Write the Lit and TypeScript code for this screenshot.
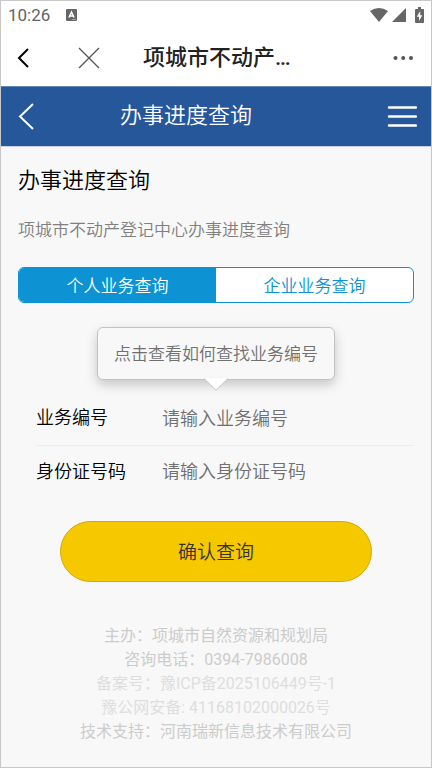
import { LitElement, html, css } from "lit";
import { customElement, state } from "lit/decorators.js";

@customElement("app-status-bar")
class AppStatusBar extends LitElement {
  static styles = css`
    :host {
      display: flex;
      align-items: center;
      height: 28px;
      padding: 0 7px;
      color: #636363;
      font: 17px/28px Roboto, sans-serif;
    }
    .badge {
      margin-left: 16px;
    }
    .signals {
      display: flex;
      align-items: center;
      margin-left: auto;
    }
    svg {
      display: block;
      fill: #666;
    }
    .cell {
      margin-left: 4px;
    }
    .battery {
      margin-left: 9px;
    }
    .cut {
      fill: #fff;
    }
    .letter {
      fill: none;
      stroke: #fff;
      stroke-width: 1.5;
    }
  `;

  render() {
    return html`
      <span>10:26</span>
      <svg class="badge" width="11" height="12" viewBox="0 0 11 12" aria-hidden="true">
        <rect width="11" height="12" rx="1" />
        <path class="letter" d="M3 8.5 5.5 3 8 8.5M3.8 7H7.2" />
        <rect class="cut" x="6" y="10" width="4" height="1" opacity="0.4" />
      </svg>
      <div class="signals">
        <svg width="18" height="14" viewBox="0 0 18 14" aria-hidden="true">
          <path d="M0 3Q9-3 18 3L9 14Z" />
        </svg>
        <svg class="cell" width="14" height="14" viewBox="0 0 14 14" aria-hidden="true">
          <path d="M14 0V14H0Z" />
        </svg>
        <svg class="battery" width="9" height="16" viewBox="0 0 9 16" aria-hidden="true">
          <path d="M3 0H6V2H8Q9 2 9 3V15Q9 16 8 16H1Q0 16 0 15V3Q0 2 1 2H3Z" />
          <path class="cut" d="M5.2 4 1.8 9.8H4V14L7.3 8.2H5.2Z" />
        </svg>
      </div>
    `;
  }
}

@customElement("app-root")
class AppRoot extends LitElement {
  @state() private tab = 0;

  static styles = css`
    :host {
      display: block;
      box-sizing: border-box;
      min-height: 100vh;
      border: 1px solid #c8c8c8;
      background: #f8f8f8;
      color: #000;
      font-family: Roboto, "Noto Sans CJK SC", sans-serif;
      font-weight: 350;
    }
    * {
      box-sizing: border-box;
    }
    h1,
    h2,
    p {
      margin: 0;
      font-weight: inherit;
    }
    button {
      padding: 0;
      border: 0;
      background: none;
      font: inherit;
      color: inherit;
      cursor: pointer;
    }
    svg {
      display: block;
      fill: none;
    }
    .top {
      background: #fff;
    }
    .nav {
      display: flex;
      align-items: center;
      height: 57px;
      padding: 0 18px 0 16px;
    }
    .close {
      margin-left: 48px;
    }
    .site {
      margin-left: 42px;
      color: #222;
      font-size: 22px;
      font-weight: 500;
      line-height: 32px;
    }
    .more {
      margin-left: auto;
    }
    .header {
      display: grid;
      grid-template-columns: 30px 1fr 30px;
      align-items: center;
      height: 61px;
      padding: 0 14px 0 16px;
      border-top: 1px solid #6488b5;
      border-bottom: 1px solid #c5d0e4;
      background: #26579b;
      color: #fff;
    }
    .header h1 {
      padding-right: 62px;
      padding-bottom: 2px;
      font-size: 22px;
      line-height: 32px;
      text-align: center;
    }
    .main {
      padding: 18px 17px 20px;
    }
    .title {
      font-size: 22px;
      line-height: 32px;
    }
    .intro {
      margin-top: 20px;
      color: #808080;
      font-size: 17px;
      line-height: 26px;
    }
    .tabs {
      display: flex;
      height: 36px;
      margin-top: 24px;
      border: 1px solid #0d93d3;
      border-radius: 6px;
      overflow: hidden;
      background: #fff;
    }
    .tab {
      flex: 1;
      color: #0d93d3;
      font-size: 17px;
      line-height: 36px;
    }
    .tab.on {
      background: #0d93d3;
      color: #fff;
    }
    .tip {
      position: relative;
      display: block;
      height: 53px;
      margin: 24px auto 0;
      padding: 0 16px;
      border: 1px solid #c3c3c3;
      border-radius: 6px;
      background: #f8f8f8;
      box-shadow: 0 5px 12px rgba(0, 0, 0, 0.2);
      color: #707070;
      font-size: 17px;
      line-height: 50px;
    }
    .arrow {
      position: absolute;
      top: 100%;
      left: 50%;
      margin: -1px 0 0 -12px;
      fill: #fff;
      stroke: #c3c3c3;
    }
    .form {
      margin-top: 11px;
    }
    .field {
      display: flex;
      align-items: center;
      height: 54px;
      margin-left: 18px;
      font-size: 18px;
    }
    .field + .field {
      border-top: 1px solid #ededed;
      height: 52px;
    }
    .field label {
      width: 126px;
      line-height: 26px;
    }
    .field input {
      flex: 1;
      min-width: 0;
      padding: 0;
      border: 0;
      outline: 0;
      background: none;
      font: inherit;
    }
    .field input::placeholder {
      color: #707070;
    }
    .submit {
      display: block;
      width: calc(100% - 84px);
      height: 61px;
      margin: 24px auto 0;
      padding-bottom: 2px;
      border: 1px solid #d2ab07;
      border-radius: 31px;
      background: #f6c800;
      color: #333;
      font-size: 19px;
    }
    .footer {
      margin-top: 42px;
      color: #ccc;
      font-size: 16px;
      font-weight: 400;
      line-height: 24px;
      text-align: center;
    }
    .footer a {
      display: block;
      color: #dedede;
      text-decoration: none;
    }
  `;

  private renderTab(label: string, index: number) {
    const on = this.tab === index;
    return html`<button
      type="button"
      class="tab ${on ? "on" : ""}"
      aria-pressed=${on}
      @click=${() => (this.tab = index)}
    >${label}</button>`;
  }

  render() {
    return html`
      <div class="top">
        <app-status-bar></app-status-bar>
        <nav class="nav">
          <button type="button" aria-label="返回">
            <svg width="12" height="20" viewBox="0 0 12 20" stroke="#000" stroke-width="2">
              <path d="M11 1 2 10l9 9" />
            </svg>
          </button>
          <button type="button" class="close" aria-label="关闭">
            <svg width="24" height="22" viewBox="0 0 24 22" stroke="#555" stroke-width="1.3">
              <path d="M2 1 22 21M22 1 2 21" />
            </svg>
          </button>
          <p class="site">项城市不动产…</p>
          <button type="button" class="more" aria-label="更多">
            <svg width="20" height="6" viewBox="0 0 20 6">
              <g fill="#55554f">
                <circle cx="2.5" cy="3" r="2" />
                <circle cx="10.2" cy="3" r="2" />
                <circle cx="18" cy="3" r="2" />
              </g>
            </svg>
          </button>
        </nav>
      </div>
      <header class="header">
        <button type="button" aria-label="上一页">
          <svg width="18" height="28" viewBox="0 0 18 28" stroke="#fff" stroke-width="2">
            <path d="M16 1 3 13.5 16 26" />
          </svg>
        </button>
        <h1>办事进度查询</h1>
        <button type="button" aria-label="菜单">
          <svg width="30" height="22" viewBox="0 0 30 22" stroke="#fff" stroke-width="2.4" stroke-linecap="round">
            <path d="M2 1.5H29M2 10.5H29M2 19.5H29" />
          </svg>
        </button>
      </header>
      <main class="main">
        <h2 class="title">办事进度查询</h2>
        <p class="intro">项城市不动产登记中心办事进度查询</p>
        <div class="tabs">
          ${this.renderTab("个人业务查询", 0)} ${this.renderTab("企业业务查询", 1)}
        </div>
        <button type="button" class="tip">
          点击查看如何查找业务编号
          <svg class="arrow" width="24" height="13" viewBox="0 0 24 13" aria-hidden="true">
            <path d="M0 .5 12 12.3 24 .5" />
          </svg>
        </button>
        <form class="form" @submit=${(e: Event) => e.preventDefault()}>
          <div class="field">
            <label for="number">业务编号</label>
            <input id="number" type="text" placeholder="请输入业务编号" />
          </div>
          <div class="field">
            <label for="identity">身份证号码</label>
            <input id="identity" type="text" placeholder="请输入身份证号码" />
          </div>
          <button type="submit" class="submit">确认查询</button>
        </form>
        <footer class="footer">
          <p>主办：项城市自然资源和规划局</p>
          <p>咨询电话：0394-7986008</p>
          <a href="#">备案号：豫ICP备2025106449号-1</a>
          <a href="#">豫公网安备: 41168102000026号</a>
          <p>技术支持：河南瑞新信息技术有限公司</p>
        </footer>
      </main>
    `;
  }
}
